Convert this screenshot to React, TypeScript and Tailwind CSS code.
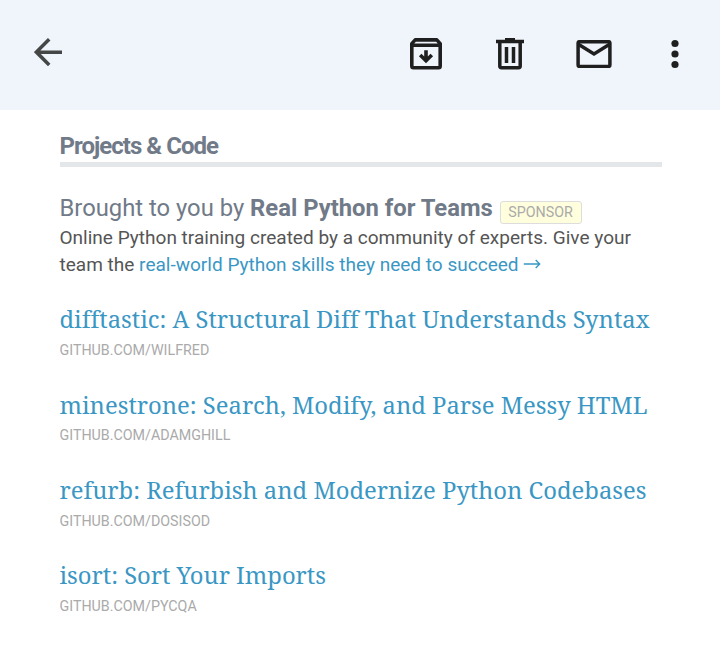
const items = [
  ['difftastic: A Structural Diff That Understands Syntax', 'GITHUB.COM/WILFRED'],
  ['minestrone: Search, Modify, and Parse Messy HTML', 'GITHUB.COM/ADAMGHILL'],
  ['refurb: Refurbish and Modernize Python Codebases', 'GITHUB.COM/DOSISOD'],
  ['isort: Sort Your Imports', 'GITHUB.COM/PYCQA'],
] as const;

function BackIcon() {
  return (
    <svg viewBox="0 0 28 28" className="size-7 text-[#444746]" fill="none" stroke="currentColor" strokeWidth="3.5">
      <path d="M28 14.2H2.5M15.2 1.2L2.4 14.1L15.2 27" />
    </svg>
  );
}

function ArchiveIcon() {
  return (
    <svg viewBox="0 0 32 32" className="size-8" fill="none" stroke="currentColor" strokeWidth="3.6">
      <path d="M1.8 7.2V28.1Q1.8 29.8 3.5 29.8H28.5Q30.2 29.8 30.2 28.1V5.6L26.8 1.9H5.2L1.8 5.6V7.2H30.2" strokeLinejoin="round" />
      <path d="M16 12.2V22.5M10.2 17L16 22.8L21.8 17" />
    </svg>
  );
}

function TrashIcon() {
  return (
    <svg viewBox="0 0 28 32" className="h-8 w-7" fill="none" stroke="currentColor" strokeWidth="3.5">
      <path d="M0 3.6H28M9 1.8H19" />
      <path d="M3.8 3.6V28.1Q3.8 29.8 5.5 29.8H22.5Q24.2 29.8 24.2 28.1V3.6" />
      <path d="M10.5 9V25M17.5 9V25" />
    </svg>
  );
}

function MailIcon() {
  return (
    <svg viewBox="0 0 36 28" className="h-7 w-9" fill="none" stroke="currentColor" strokeWidth="3.5">
      <rect x="2.1" y="1.7" width="31.8" height="24.8" rx="1.6" />
      <path d="M2 4L18 14L34 4" />
    </svg>
  );
}

function MoreIcon() {
  return (
    <svg viewBox="0 0 8 30" className="h-[30px] w-2" fill="currentColor">
      <circle cx="4" cy="4.5" r="3.6" />
      <circle cx="4" cy="15" r="3.6" />
      <circle cx="4" cy="25.5" r="3.6" />
    </svg>
  );
}

export default function App() {
  return (
    <div className="h-[646px] w-[720px] overflow-hidden bg-white font-[Roboto,sans-serif]">
      <header className="flex h-[110px] items-start bg-[#f0f4fb] pt-[38px] pr-[41px] pl-[34px] text-[#1f1f1f]">
        <BackIcon />
        <div className="ml-auto flex items-start">
          <ArchiveIcon />
          <div className="ml-[54px]"><TrashIcon /></div>
          <div className="mt-[2px] ml-[52px]"><MailIcon /></div>
          <div className="mt-[1px] ml-[59px]"><MoreIcon /></div>
        </div>
      </header>
      <main className="px-[59.5px] pt-[22px]">
        <h1 className="h-[30px] text-[24px] leading-[28px] font-bold tracking-[-0.97px] text-[#707a88]"><span>Projects &amp; Code</span></h1>
        <div className="h-[5px] w-[602.5px] bg-[#e4e7ea]" />
        <h2 className="mt-[25px] flex h-[32px] text-[23.8px] leading-[32px] text-[#707a88]">
          <span className="whitespace-pre">Brought to you by <b>Real Python for Teams</b></span>
          <span className="mt-[9px] ml-[7.5px] h-[23px] w-[82px] rounded-[3px] border border-[#dddddd] bg-[#ffffdd] pl-[7px] text-[14.25px] leading-[21px] text-[#aaaaaa]">SPONSOR</span>
        </h2>
        <p className="text-[19.05px] leading-[27px] whitespace-nowrap text-[#555555]">
          Online Python training created by a community of experts. Give your<br />
          team the <span className="text-[#3a97c4]">real-world Python skills they need to succeed <svg viewBox="0 0 18 12" className="inline-block h-3 w-[18px] align-[1px]" fill="none" stroke="currentColor" strokeWidth="1.4"><path d="M0.8 6H16.7M12.7 2L16.7 6L12.7 10" /></svg></span>
        </p>
        <ul className="mt-[24px]">
          {items.map(([title, site]) => (
            <li key={site} className="h-[85.4px]">
              <h3 className="h-[34px] pt-[0.2px] font-['Noto_Serif','Liberation_Serif',serif] text-[23.8px] leading-[34px] whitespace-nowrap text-[#3a97c4] [font-variant-ligatures:none]"><span>{title}</span></h3>
              <p className="pt-[1px] text-[14.28px] leading-[26px] text-[#aaaaaa]">{site}</p>
            </li>
          ))}
        </ul>
      </main>
    </div>
  );
}
